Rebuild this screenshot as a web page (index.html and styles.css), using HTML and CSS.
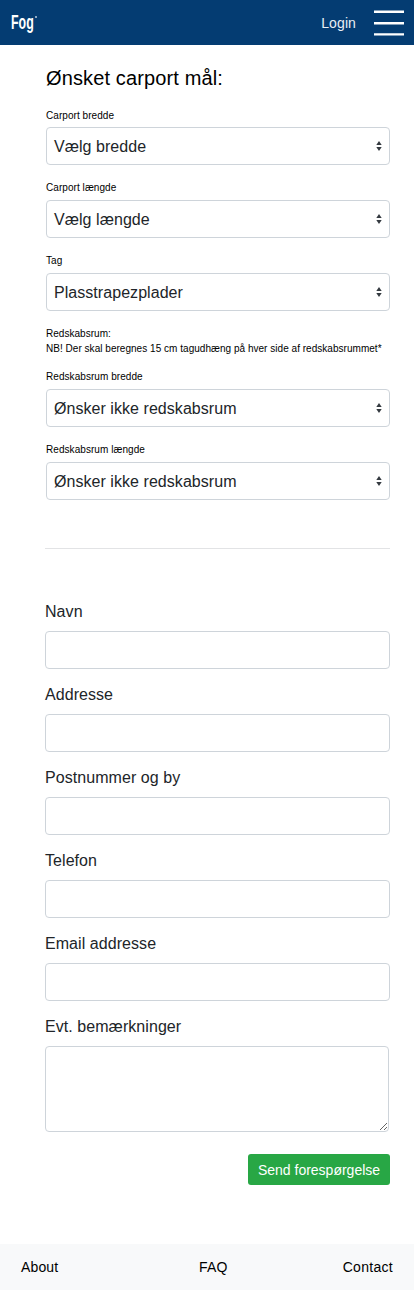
FILE: index.html
```html
<!DOCTYPE html>
<html lang="da">
<head>
<meta charset="utf-8">
<meta name="viewport" content="width=device-width, initial-scale=1">
<title>Fog carport</title>
<link rel="stylesheet" href="styles.css">
</head>
<body>
<header class="topbar">
  <svg class="logo" width="30" height="28" viewBox="0 0 30 28" role="img" aria-label="Fog">
    <text class="logo-text" transform="translate(1 19.5) scale(.62 1)">Fog</text>
    <circle cx="26" cy="8" r="1" fill="#b9cbe0"/>
  </svg>
  <a class="login">Login</a>
  <svg class="burger" width="30" height="26" viewBox="0 0 30 26" aria-label="Menu">
    <path d="M0 1.7H30M0 13.2H30M0 24.4H30" stroke="#fff" stroke-width="2.4"/>
  </svg>
</header>
<main class="page">
  <section class="carport">
    <h1 class="title">Ønsket carport mål:</h1>
    <div class="group"><div class="label">Carport bredde</div>
      <div class="select"><span>Vælg bredde</span><svg class="arrows" viewBox="0 0 6 10"><path d="M3 0L.3 4h5.4zM3 10L.3 6h5.4z"/></svg></div></div>
    <div class="group"><div class="label raised">Carport længde</div>
      <div class="select"><span>Vælg længde</span><svg class="arrows" viewBox="0 0 6 10"><path d="M3 0L.3 4h5.4zM3 10L.3 6h5.4z"/></svg></div></div>
    <div class="group"><div class="label raised">Tag</div>
      <div class="select"><span>Plasstrapezplader</span><svg class="arrows" viewBox="0 0 6 10"><path d="M3 0L.3 4h5.4zM3 10L.3 6h5.4z"/></svg></div></div>
    <p class="note">Redskabsrum:<br>NB! Der skal beregnes 15 cm tagudhæng på hver side af redskabsrummet*</p>
    <div class="group"><div class="label raised">Redskabsrum bredde</div>
      <div class="select"><span>Ønsker ikke redskabsrum</span><svg class="arrows" viewBox="0 0 6 10"><path d="M3 0L.3 4h5.4zM3 10L.3 6h5.4z"/></svg></div></div>
    <div class="group"><div class="label raised">Redskabsrum længde</div>
      <div class="select"><span>Ønsker ikke redskabsrum</span><svg class="arrows" viewBox="0 0 6 10"><path d="M3 0L.3 4h5.4zM3 10L.3 6h5.4z"/></svg></div></div>
  </section>
  <hr class="divider">
  <form class="contact">
    <label class="field">Navn<input class="input" type="text"></label>
    <label class="field">Addresse<input class="input" type="text"></label>
    <label class="field">Postnummer og by<input class="input" type="text"></label>
    <label class="field">Telefon<input class="input" type="text"></label>
    <label class="field">Email addresse<input class="input" type="text"></label>
    <label class="field">Evt. bemærkninger<textarea class="input area"></textarea></label>
    <button class="send" type="button">Send forespørgelse</button>
  </form>
</main>
<footer class="footer"><a>About</a><a>FAQ</a><a class="end">Contact</a></footer>
</body>
</html>
```
FILE: styles.css
```css
* { box-sizing: border-box; }
body {
  margin: 0;
  min-height: 1290px;
  display: flex;
  flex-direction: column;
  background: #fff;
  color: #212529;
  font-family: "Liberation Sans", Arial, sans-serif;
  font-size: 16px;
}
.topbar {
  height: 45px;
  padding: 0 10px;
  display: flex;
  align-items: center;
  background: #043c72;
  color: #fff;
}
.logo { display: block; }
.logo-text { font: bold 20px "Liberation Sans", Arial, sans-serif; fill: #fff; }
.login { margin-left: auto; font-size: 14px; letter-spacing: .1px; color: #e9eff5; }
.burger { margin-left: 18px; }
.page { flex: 1; padding: 0 24px 0 45px; }
.carport { padding-left: 1px; color: #000; }
.title {
  margin: 0;
  padding-top: 21px;
  height: 60px;
  font-size: 20px;
  line-height: 24px;
  font-weight: 400;
  letter-spacing: .13px;
}
.group { margin-bottom: 13px; }
.label { height: 22px; font-size: 10px; line-height: 22px; letter-spacing: .06px; }
.raised { line-height: 20px; }
.select {
  height: 38px;
  padding: 2px 7px 0;
  display: flex;
  align-items: center;
  justify-content: space-between;
  border: 1px solid #ced4da;
  border-radius: 4px;
  color: #212529;
  letter-spacing: .05px;
}
.arrows { width: 6px; height: 10px; margin-top: -2px; fill: #343a40; }
.note {
  margin: 0;
  padding-top: 2px;
  height: 43px;
  font-size: 10px;
  line-height: 15px;
  letter-spacing: .03px;
  white-space: nowrap;
}
.divider { margin: 48px 0 51px; border: 0; border-top: 1px solid #e2e3e5; }
.contact { display: flex; flex-direction: column; }
.field { display: block; margin-bottom: 14px; line-height: 24px; letter-spacing: .06px; }
.input {
  display: block;
  width: 100%;
  height: 38px;
  margin: 7px 0 0;
  border: 1px solid #ced4da;
  border-radius: 4px;
  background: #fff;
}
.area { width: 344px; height: 86px; resize: vertical; }
.send {
  align-self: flex-end;
  width: 142px;
  height: 31px;
  margin-top: 8px;
  padding: 0;
  border: 0;
  border-radius: 3px;
  background: #28a745;
  color: #fff;
  font: 14px "Liberation Sans", Arial, sans-serif;
}
.footer {
  height: 46px;
  padding: 0 21px;
  display: grid;
  grid-template-columns: 178px 1fr auto;
  align-items: center;
  background: #f8f9fa;
  color: #000;
  font-size: 14px;
  letter-spacing: .15px;
}
.end { letter-spacing: .3px; }
```
